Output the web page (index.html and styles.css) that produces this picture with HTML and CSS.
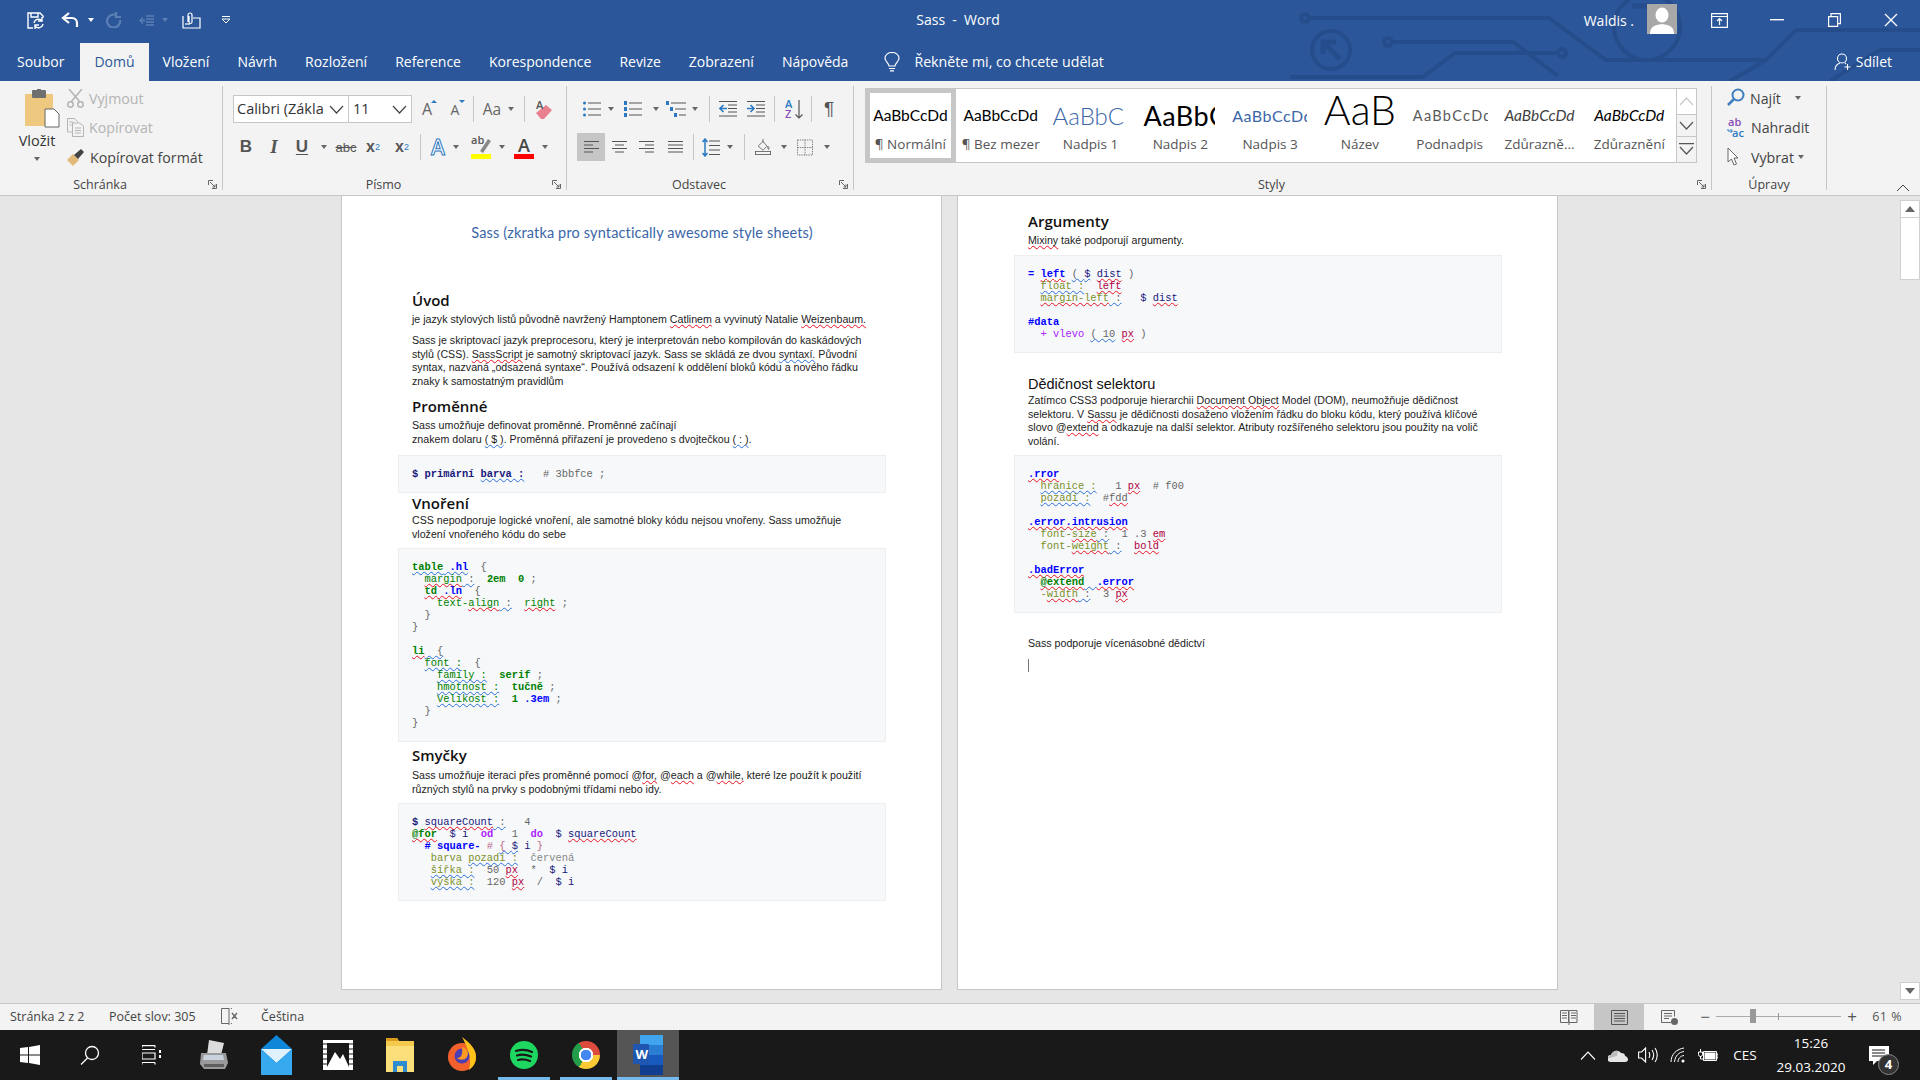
FILE: index.html
```html
<!DOCTYPE html>
<html lang="cs">
<head>
  <meta charset="UTF-8" />
  <title>Sass - Word</title>
  <link rel="stylesheet" href="styles.css">
</head>
<body>
<div class="app">

  <!-- title bar + tabs share the circuit background -->
  <header class="head">
    <svg class="circuit" width="640" height="81" viewBox="1280 0 640 81" fill="none" stroke="#264d8b" stroke-width="4">
      <path d="M1309 18H1549L1606 60H1766L1796 30H1920"/>
      <circle cx="1305" cy="18" r="4"/>
      <path d="M1392 42H1513L1558 76"/>
      <circle cx="1388" cy="42" r="4"/>
      <path d="M1290 77H1423L1455 53H1558"/>
      <circle cx="1562" cy="53" r="4"/>
      <circle cx="1331" cy="50" r="19"/>
      <path d="M1340 59L1325 44M1323 54V42H1336" stroke-width="5"/>
      <circle cx="1647" cy="27" r="33"/>
      <path d="M1632 6H1658V20" stroke-width="5"/>
      <path d="M1730 81L1766 60M1830 81L1880 50H1920"/>
    </svg>

    <div class="titlebar">
      <div class="qat">
        <span class="slot w32">
          <svg width="18" height="17" viewBox="0 0 18 17" fill="none" stroke="#fff" stroke-width="1.4"><path d="M6 16H1V1h12l3 3v2"/><path d="M4 1v4h7V1"/><path d="M7 11a4.500 4.500 0 0 1 8-2M16 12a4.500 4.500 0 0 1-8 2"/><path d="M15 5v4h-4M8 17v-4h4"/></svg>
        </span>
        <span class="slot w36">
          <svg width="18" height="16" viewBox="0 0 18 16" fill="none" stroke="#fff" stroke-width="2.200"><path d="M8 1L2 6l6 5"/><path d="M3 6h8a5 5 0 0 1 5 5v4"/></svg>
        </span>
        <span class="slot w6"><i class="caret white"></i></span>
        <span class="slot w40">
          <svg width="16" height="16" viewBox="0 0 16 16" fill="none" stroke="#5c7fb5" stroke-width="2.200"><path d="M11 3.500A6.500 6.500 0 1 0 14 8"/><path d="M10 0v5h5"/></svg>
        </span>
        <span class="slot w24">
          <svg width="15" height="13" viewBox="0 0 15 13" fill="none" stroke="#5c7fb5" stroke-width="1.300"><path d="M7 2h8M7 5h8M7 8h8M7 11h8M6 6.500H1M4 3.500L1 6.500l3 3"/></svg>
        </span>
        <span class="slot w14"><i class="caret dim"></i></span>
        <span class="slot w38">
          <svg width="19" height="17" viewBox="0 0 19 17" fill="none" stroke="#fff" stroke-width="1.200"><path d="M1 4v12h17V6H11"/><path d="M6 10V3a2 2 0 0 1 4 0v7a1 1 0 0 1-3 0V4"/><path d="M3 12h5"/></svg>
        </span>
        <span class="slot w32">
          <svg width="10" height="8" viewBox="0 0 10 8" fill="none" stroke="#fff"><path d="M1 .5h8M1 3l4 4 4-4z"/></svg>
        </span>
      </div>
      <div class="doc-title">Sass &nbsp;-&nbsp; Word</div>
      <div class="win">
        <span class="user">Waldis .</span>
        <svg class="avatar" width="30" height="30" viewBox="0 0 30 30"><rect width="30" height="30" fill="#a8a8a8"/><ellipse cx="15" cy="11" rx="6.500" ry="7.500" fill="#fff"/><path d="M3 30c0-7 4-9 12-10 8 1 12 3 12 10z" fill="#fff"/></svg>
        <span class="slot w84">
          <svg width="17" height="15" viewBox="0 0 17 15" fill="none" stroke="#fff" stroke-width="1.200"><path d="M.6.600h15.800v13.800H.6zM.6 3.500h15.800"/><path d="M8.500 12V6M6 8l2.500-2.500L11 8"/></svg>
        </span>
        <span class="slot w32"><svg width="14" height="2" viewBox="0 0 14 2"><rect width="14" height="1.400" fill="#fff"/></svg></span>
        <span class="slot w82">
          <svg width="13" height="14" viewBox="0 0 13 14" fill="none" stroke="#fff" stroke-width="1.200"><path d="M.6 3.600h9v9.800h-9zM3 3.500V.6h9.400v10h-2.800"/></svg>
        </span>
        <span class="slot w32">
          <svg width="14" height="14" viewBox="0 0 14 14" stroke="#fff" stroke-width="1.300"><path d="M1 1l12 12M13 1L1 13"/></svg>
        </span>
      </div>
    </div>

    <nav class="tabs">
      <span class="tab">Soubor</span>
      <span class="tab active">Domů</span>
      <span class="tab">Vložení</span>
      <span class="tab">Návrh</span>
      <span class="tab">Rozložení</span>
      <span class="tab">Reference</span>
      <span class="tab">Korespondence</span>
      <span class="tab">Revize</span>
      <span class="tab">Zobrazení</span>
      <span class="tab">Nápověda</span>
      <span class="tell">
        <svg width="16" height="20" viewBox="0 0 16 20" fill="none" stroke="#fff" stroke-width="1.200"><path d="M5 14c0-3-4-4-4-8a7 5.500 0 0 1 14 0c0 4-4 5-4 8z"/><path d="M5 16.500h6M6 18.800h4"/></svg>
        Řekněte mi, co chcete udělat
      </span>
      <span class="share">
        <svg width="17" height="18" viewBox="0 0 17 18" fill="none" stroke="#fff" stroke-width="1.100"><circle cx="8" cy="5.500" r="4.500"/><path d="M1 17c0-4 2-6 5-7M11 10l1 1M13.500 11v6M10.500 14h6"/></svg>
        Sdílet
      </span>
    </nav>
  </header>

  <section class="ribbon">

    <div class="group g-clip">
      <div class="group-body tight clip-body">
        <div class="paste">
          <svg width="35" height="39" viewBox="0 0 35 39"><rect x="0" y="5" width="28" height="32" fill="#edc87e"/><rect x="7" y="1" width="14" height="8" rx="1" fill="#6f6f6f"/><rect x="12" y="0" width="4" height="3" fill="#6f6f6f"/><path d="M20 20h9l5 5v13H20z" fill="#fff" stroke="#666"/></svg>
          <span class="paste-label">Vložit</span>
          <i class="caret"></i>
        </div>
        <div class="clip-list">
          <div class="clip-row off">
            <svg width="17" height="19" viewBox="0 0 17 19" fill="none" stroke="#b4b4b4" stroke-width="1.500"><path d="M2 0l11 13M15 0L4 13"/><circle cx="3.500" cy="15.500" r="2.700"/><circle cx="13.500" cy="15.500" r="2.700"/></svg>
            Vyjmout
          </div>
          <div class="clip-row off">
            <svg width="17" height="19" viewBox="0 0 17 19" fill="none" stroke="#b4b4b4"><path d="M5 14H.5V.5h7l3 3v1"/><path d="M5.500 5h7l4 3v10.500h-11zM8 10h6M8 12.500h6M8 15h6M2.500 4h4M2.500 7h2"/></svg>
            Kopírovat
          </div>
          <div class="clip-row">
            <svg width="18" height="18" viewBox="0 0 18 18"><path d="M0 12l6-6 6 6-6 6z" fill="#e3b978"/><path d="M7 7l7-6 3 3-6 7z" fill="#444"/></svg>
            Kopírovat formát
          </div>
        </div>
      </div>
      <div class="group-label">Schránka</div>
      <svg class="launcher" width="9" height="9" viewBox="0 0 9 9" fill="none" stroke="#666"><path d="M.5 5V.5H5M8.500 4v4.500H4M2 2l5 5M4.500 7H7V4.500"/></svg>
    </div>

    <div class="group g-font">
      <div class="group-body">
        <div class="row font-row">
          <span class="combo c-font">Calibri (Zákla<svg class="chev" width="15" height="9" viewBox="0 0 15 9" fill="none" stroke="#444" stroke-width="1.200"><path d="M1 1l6.500 7L14 1"/></svg></span>
          <span class="combo c-size">11<svg class="chev" width="15" height="9" viewBox="0 0 15 9" fill="none" stroke="#444" stroke-width="1.200"><path d="M1 1l6.500 7L14 1"/></svg></span>
          <span class="slot w30 glyph big-a">A<i class="up"></i></span>
          <span class="slot w26 glyph big-a small-a">A<i class="down"></i></span>
          <span class="slot w10"><i class="vsep"></i></span>
          <span class="slot w28 glyph aa">Aa</span>
          <span class="slot w10"><i class="caret"></i></span>
          <span class="slot w16"><i class="vsep"></i></span>
          <span class="slot w24">
            <svg width="18" height="19" viewBox="0 0 18 19"><path d="M1 13L11 5l6 5-8 9H6z" fill="#e8808f"/><text x="1" y="9" class="svg-a">A</text></svg>
          </span>
        </div>
        <div class="row font-row">
          <span class="slot w26 glyph bold">B</span>
          <span class="slot w30 glyph ital">I</span>
          <span class="slot w26 glyph under">U</span>
          <span class="slot w18"><i class="caret"></i></span>
          <span class="slot w26 glyph strike">abc</span>
          <span class="slot w28 glyph bold sm">x<sub>2</sub></span>
          <span class="slot w30 glyph bold sm">x<sup>2</sup></span>
          <span class="slot w6"><i class="vsep"></i></span>
          <span class="slot w30 glyph effect">A</span>
          <span class="slot w6"><i class="caret"></i></span>
          <span class="slot w10"></span>
          <span class="slot w24">
            <svg width="20" height="24" viewBox="0 0 20 24"><path d="M9 16l8-12 3 2-8 12z" fill="#888"/><rect y="19" width="20" height="5" fill="#ff0"/><text x="0" y="9" class="svg-ab">ab</text></svg>
          </span>
          <span class="slot w18"><i class="caret"></i></span>
          <span class="slot w26 fcolor"><span class="fc-a">A</span><i class="fc-bar"></i></span>
          <span class="slot w16"><i class="caret"></i></span>
        </div>
      </div>
      <div class="group-label">Písmo</div>
      <svg class="launcher" width="9" height="9" viewBox="0 0 9 9" fill="none" stroke="#666"><path d="M.5 5V.5H5M8.500 4v4.500H4M2 2l5 5M4.500 7H7V4.500"/></svg>
    </div>

    <div class="group g-para">
      <div class="group-body">
        <div class="row para-row">
          <span class="slot w30"><svg width="18" height="18" viewBox="0 0 18 18" fill="none" stroke="#555"><path d="M5 3h13M5 9h13M5 15h13"/><g fill="#2b79c2" stroke="none"><circle cx="1.500" cy="3" r="1.500"/><circle cx="1.500" cy="9" r="1.500"/><circle cx="1.500" cy="15" r="1.500"/></g></svg></span>
          <span class="slot w8"><i class="caret"></i></span>
          <span class="slot w36"><svg width="18" height="18" viewBox="0 0 18 18" fill="none" stroke="#555"><path d="M5 3h13M5 9h13M5 15h13"/><g fill="#2b79c2" stroke="none"><rect y="1" width="3" height="4"/><rect y="7" width="3" height="4"/><rect y="13" width="3" height="4"/></g></svg></span>
          <span class="slot w10"><i class="caret"></i></span>
          <span class="slot w30"><svg width="20" height="18" viewBox="0 0 20 18" fill="none" stroke="#555"><path d="M5 3h15M9 9h11M13 15h7"/><g fill="#2b79c2" stroke="none"><rect y="1" width="3" height="4"/><rect x="4" y="7" width="3" height="4"/><rect x="8" y="13" width="3" height="4"/></g></svg></span>
          <span class="slot w8"><i class="caret"></i></span>
          <span class="slot w20"><i class="vsep"></i></span>
          <span class="slot w18"><svg width="18" height="16" viewBox="0 0 18 16" fill="none" stroke="#555"><path d="M0 .5h18M9 4h9M9 7.500h9M9 11h9M0 15h18"/><path d="M1 7.500h7M4.500 4L1 7.500 4.500 11" stroke="#2b79c2" stroke-width="1.600"/></svg></span>
          <span class="slot w8"></span>
          <span class="slot w22"><svg width="18" height="16" viewBox="0 0 18 16" fill="none" stroke="#555"><path d="M0 .5h18M9 4h9M9 7.500h9M9 11h9M0 15h18"/><path d="M0 7.500h7M3.500 4L7 7.500 3.500 11" stroke="#2b79c2" stroke-width="1.600"/></svg></span>
          <span class="slot w14"><i class="vsep"></i></span>
          <span class="slot w26"><svg width="18" height="20" viewBox="0 0 18 20" fill="none" stroke="#555" stroke-width="1.200"><path d="M14 1v18M10.500 15.500L14 19l3.500-3.500"/><text x="0" y="9" class="svg-az blue">A</text><text x="0" y="19" class="svg-az violet">Z</text></svg></span>
          <span class="slot w8"><i class="vsep"></i></span>
          <span class="slot w28 pilcrow">¶</span>
        </div>
        <div class="row para-row">
          <span class="slot w28 on"><svg width="15" height="12" viewBox="0 0 15 12" stroke="#555"><path d="M0 .5h15M0 4h9M0 7.500h15M0 11h9"/></svg></span>
          <span class="slot w28"><svg width="15" height="12" viewBox="0 0 15 12" stroke="#555"><path d="M0 .5h15M3 4h9M0 7.500h15M3 11h9"/></svg></span>
          <span class="slot w26"><svg width="15" height="12" viewBox="0 0 15 12" stroke="#555"><path d="M0 .5h15M6 4h9M0 7.500h15M6 11h9"/></svg></span>
          <span class="slot w32"><svg width="15" height="12" viewBox="0 0 15 12" stroke="#555"><path d="M0 .5h15M0 4h15M0 7.500h15M0 11h15"/></svg></span>
          <span class="slot w4"><i class="vsep"></i></span>
          <span class="slot w32"><svg width="18" height="19" viewBox="0 0 18 19" fill="none" stroke="#555"><path d="M7 3h11M7 7.500h11M7 12h11M7 16.500h11"/><path d="M3 1v17M.5 4L3 1l2.500 3M.5 15L3 18l2.500-3" stroke="#2b79c2" stroke-width="1.500"/></svg></span>
          <span class="slot w6"><i class="caret"></i></span>
          <span class="slot w22"><i class="vsep"></i></span>
          <span class="slot w16"><svg width="20" height="20" viewBox="0 0 20 20" fill="none" stroke="#555"><path d="M4 9l6-6 5 6-5 5z"/><path d="M10 0v4M16 9c2 2 2 4 1 4s-1-2-1-4z"/><rect x=".5" y="15.500" width="19" height="4"/></svg></span>
          <span class="slot w26"><i class="caret"></i></span>
          <span class="slot w16"><svg width="17" height="17" viewBox="0 0 17 17" fill="none" stroke="#777" stroke-dasharray="1.500 1"><path d="M.5.500h16v16H.5zM8.500.500v16M.5 8.500h16"/></svg></span>
          <span class="slot w28"><i class="caret"></i></span>
        </div>
      </div>
      <div class="group-label">Odstavec</div>
      <svg class="launcher" width="9" height="9" viewBox="0 0 9 9" fill="none" stroke="#666"><path d="M.5 5V.5H5M8.500 4v4.500H4M2 2l5 5M4.500 7H7V4.500"/></svg>
    </div>

    <div class="group g-styles">
      <div class="gallery">
        <div class="style-item current"><div class="preview">AaBbCcDd</div><div class="style-name">¶ Normální</div></div>
        <div class="style-item"><div class="preview">AaBbCcDd</div><div class="style-name">¶ Bez mezer</div></div>
        <div class="style-item"><div class="preview h1">AaBbCcDd</div><div class="style-name">Nadpis 1</div></div>
        <div class="style-item"><div class="preview h2p">AaBbCcDd</div><div class="style-name">Nadpis 2</div></div>
        <div class="style-item"><div class="preview h3p">AaBbCcDd</div><div class="style-name">Nadpis 3</div></div>
        <div class="style-item"><div class="preview title-p">AaB</div><div class="style-name">Název</div></div>
        <div class="style-item"><div class="preview sub-p">AaBbCcDd</div><div class="style-name">Podnadpis</div></div>
        <div class="style-item"><div class="preview em-p">AaBbCcDd</div><div class="style-name">Zdůrazně...</div></div>
        <div class="style-item"><div class="preview em2-p">AaBbCcDd</div><div class="style-name">Zdůraznění</div></div>
        <div class="gallery-scroll">
          <span class="gs gs-up"><svg width="15" height="9" viewBox="0 0 15 9" fill="none" stroke="#c9c9c9" stroke-width="1.200"><path d="M1 8l6.500-7L14 8"/></svg></span>
          <span class="gs gs-down"><svg width="15" height="9" viewBox="0 0 15 9" fill="none" stroke="#555" stroke-width="1.200"><path d="M1 1l6.500 7L14 1"/></svg></span>
          <span class="gs gs-more"><svg width="15" height="13" viewBox="0 0 15 13" fill="none" stroke="#555" stroke-width="1.200"><path d="M0 .6h15M1 4l6.500 7L14 4"/></svg></span>
        </div>
      </div>
      <div class="group-label">Styly</div>
      <svg class="launcher" width="9" height="9" viewBox="0 0 9 9" fill="none" stroke="#666"><path d="M.5 5V.5H5M8.500 4v4.500H4M2 2l5 5M4.500 7H7V4.500"/></svg>
    </div>

    <div class="group g-edit">
      <div class="group-body tight edit-list">
        <div class="clip-row">
          <svg width="18" height="20" viewBox="0 0 18 20" fill="none" stroke="#3f7fbf" stroke-width="2"><circle cx="11" cy="7" r="5.500"/><path d="M7 11l-6 6" stroke-width="2.600"/></svg>
          Najít <i class="caret gap"></i>
        </div>
        <div class="clip-row tight-icon">
          <svg width="20" height="20" viewBox="0 0 20 20"><text x="1" y="8" class="svg-ab violet">ab</text><text x="5" y="19" class="svg-ab blue">ac</text><path d="M1 11v2h4M3.500 11l2 2-2 2" fill="none" stroke="#2b79c2"/></svg>
          Nahradit
        </div>
        <div class="clip-row">
          <svg width="12" height="20" viewBox="0 0 12 20" fill="#fff" stroke="#666"><path d="M1 1v14l3.500-3 2.500 6 2.500-1-2.500-6H11z"/></svg>
          <span class="vybrat">Vybrat</span> <i class="caret"></i>
        </div>
      </div>
      <div class="group-label edit-label">Úpravy</div>
    </div>

    <svg class="collapse" width="14" height="8" viewBox="0 0 14 8" fill="none" stroke="#444"><path d="M1 7l6-6 6 6"/></svg>
  </section>

  <main class="doc">
    <div class="pages">

      <article class="page">
        <h1 class="doc-head">Sass (zkratka pro syntactically awesome style sheets)</h1>
        <h2 class="m-uvod">Úvod</h2>
        <p class="m-a">je jazyk stylových listů původně navržený Hamptonem <span class="sp">Catlinem</span> a vyvinutý Natalie <span class="sp">Weizenbaum.</span></p>
        <p class="m-b">Sass je skriptovací jazyk preprocesoru, který je interpretován nebo kompilován do kaskádových<br>
        stylů (CSS). <span class="sp">SassScript</span> je samotný skriptovací jazyk. Sass se skládá ze dvou <span class="gr">syntaxí.</span> Původní<br>
        syntax, nazvaná „odsazená syntaxe“. Používá odsazení k oddělení bloků kódu a nového řádku<br>
        znaky k samostatným pravidlům</p>
        <h2 class="m-prom">Proměnné</h2>
        <p class="m-c tall">Sass umožňuje definovat proměnné. Proměnné začínají<br>
        znakem dolaru <span class="gr">( $ )</span>. Proměnná přiřazení je provedeno s dvojtečkou <span class="gr">( : )</span>.</p>
<pre class="code m-f"><b class="v">$ primární </b><b class="v gr">barva :</b><span class="g">   # 3bbfce ;</span></pre>
        <h2 class="m-vnor">Vnoření</h2>
        <p class="tall m-e">CSS nepodporuje logické vnoření, ale samotné bloky kódu nejsou vnořeny. Sass umožňuje<br>
        vložení vnořeného kódu do sebe</p>
<pre class="code"><b class="k gr">table</b><b class="t gr"> .hl</b><span class="g">  {</span>
  <span class="k sp">margin</span><span class="g gr"> :</span>  <b class="k">2em  0</b><span class="g"> ;</span>
  <b class="k sp">td</b><b class="t sp"> .ln</b><span class="g">  {</span>
    <span class="k">text-</span><span class="k sp">align</span><span class="g gr"> :</span>  <span class="k sp">right</span><span class="g"> ;</span>
  <span class="g">}</span>
<span class="g">}</span>

<b class="k sp">li</b><span class="g gr">  {</span>
  <span class="k gr">font :</span><span class="g">  {</span>
    <span class="k gr">family :</span>  <b class="k">serif</b><span class="g"> ;</span>
    <span class="k gr">hmotnost :</span>  <b class="k">tučně</b><span class="g"> ;</span>
    <span class="k gr">Velikost :</span>  <b class="k">1 </b><b class="t">.3em</b><span class="g"> ;</span>
  <span class="g">}</span>
<span class="g">}</span></pre>
        <h2 class="m-smy">Smyčky</h2>
        <p class="tall m-g">Sass umožňuje iteraci přes proměnné pomocí @<span class="sp">for,</span> @<span class="sp">each</span> a @<span class="sp">while,</span> které lze použít k použití<br>
        různých stylů na prvky s podobnými třídami nebo idy.</p>
<pre class="code"><b class="v">$ </b><span class="v sp">squareCount</span><span class="g gr"> :</span><span class="g">   4</span>
<b class="k sp">@for</b>  <span class="v">$ i</span>  <b class="p">od</b><span class="g">   1</span>  <b class="p">do</b>  <span class="v">$ </span><span class="v sp">squareCount</span>
  <b class="t"># square-</b> <span class="m">#</span> <span class="m gr">{ </span><span class="v gr">$</span> <span class="v">i</span> <span class="m">}</span>
   <span class="o">barva </span><span class="o gr">pozadí :</span>  <span class="lg">červená</span>
   <span class="o gr">šířka :</span>  <span class="g">50 </span><span class="r sp">px</span>  <span class="g">*</span>  <span class="v">$ i</span>
   <span class="o gr">výška :</span>  <span class="g">120 </span><span class="r sp">px</span>  <span class="g">/</span>  <span class="v">$ i</span></pre>
      </article>

      <article class="page">
        <h2 class="m-arg">Argumenty</h2>
        <p class="m-a2"><span class="sp">Mixiny</span> také podporují argumenty.</p>
<pre class="code m-h"><b class="t">=</b> <b class="t sp">left</b> <span class="g gr">( </span><span class="v gr">$</span> <span class="v sp">dist</span><span class="g"> )</span>
  <span class="o gr">float :</span>  <span class="r sp">left</span>
  <span class="o sp">margin-left</span><span class="g gr"> :</span>   <span class="v">$ </span><span class="v sp">dist</span>

<b class="t">#data</b>
  <span class="p">+ vlevo</span> <span class="g gr">( 10</span> <span class="r sp">px</span><span class="g"> )</span></pre>
        <h3 class="m-ded">Dědičnost selektoru</h3>
        <p class="m-e">Zatímco CSS3 podporuje hierarchii <span class="sp">Document Object</span> Model (DOM), neumožňuje dědičnost<br>
        selektoru. V <span class="sp">Sassu</span> je dědičnosti dosaženo vložením řádku do bloku kódu, který používá klíčové<br>
        slovo @<span class="sp">extend</span> a odkazuje na další selektor. Atributy rozšířeného selektoru jsou použity na volič<br>
        volání.</p>
<pre class="code"><b class="t sp">.rror</b>
  <span class="o gr">hranice :</span>   <span class="g">1 </span><span class="r sp">px</span>  <span class="g"># f00</span>
  <span class="o gr">pozadí :</span>  <span class="g">#</span><span class="g sp">fdd</span>

<b class="t sp">.error.intrusion</b>
  <span class="o">font-</span><span class="o sp">size</span><span class="g gr"> :</span>  <span class="g">1 .3 </span><span class="r sp">em</span>
  <span class="o">font-</span><span class="o sp">weight</span><span class="g gr"> :</span>  <span class="r sp">bold</span>

<b class="t sp">.badError</b>
  <b class="k sp">@extend</b><span class="g gr">  </span><b class="t sp">.error</b>
  <span class="o">-</span><span class="o sp">width</span><span class="g gr"> :</span>  <span class="g">3 </span><span class="r sp">px</span></pre>
        <p class="m-last">Sass podporuje vícenásobné dědictví</p>
        <div class="cursor"></div>
      </article>
    </div>

    <aside class="vscroll">
      <span class="vs-btn"><svg width="10" height="6" viewBox="0 0 10 6"><path d="M5 0l5 6H0z" fill="#666"/></svg></span>
      <span class="vs-thumb"></span>
      <span class="vs-btn vs-end"><svg width="10" height="6" viewBox="0 0 10 6"><path d="M5 6l5-6H0z" fill="#666"/></svg></span>
    </aside>
  </main>

  <footer class="status">
    <span class="st-page">Stránka 2 z 2</span>
    <span class="st-words">Počet slov: 305</span>
    <svg class="st-proof" width="17" height="19" viewBox="0 0 17 19" fill="none" stroke="#666"><path d="M8 1.500H.5v15H8M8 1v17M10 1.500h1M10 16.500h1"/><path d="M11 6l5 6M16 6l-5 6" stroke-width="1.400"/></svg>
    <span class="st-lang">Čeština</span>
    <div class="views">
      <span class="view"><svg width="18" height="15" viewBox="0 0 18 15" fill="none" stroke="#666"><path d="M.5.500h8v12h-8zM9 .5h8v12H9zM2 3h5M2 5.500h5M2 8h5M11 3h5M11 5.500h5M11 8h5M9 13v2"/></svg></span>
      <span class="view active"><svg width="17" height="15" viewBox="0 0 17 15" fill="none" stroke="#555"><path d="M.5.500h16v14H.5zM3 3.500h11M3 6h11M3 8.500h11M3 11h11"/></svg></span>
      <span class="view"><svg width="17" height="15" viewBox="0 0 17 15" fill="none" stroke="#666"><path d="M10 12.500H.5V.5h13v6M3 3.500h8M3 6h8M3 8.500h5"/><circle cx="13.500" cy="11.500" r="3.500" fill="#666" stroke="none"/></svg></span>
    </div>
    <div class="zoom">
      <span class="z-btn">−</span>
      <div class="z-track"><i class="z-tick"></i><i class="z-thumb"></i></div>
      <span class="z-btn">+</span>
      <span class="z-val">61 %</span>
    </div>
  </footer>

  <div class="taskbar">
    <span class="tb w60">
      <svg width="20" height="20" viewBox="0 0 20 20" fill="#fff"><path d="M0 3l8-1v7.500H0zM9 2l11-2v9.500H9zM0 10.500h8V18l-8-1zM9 10.500h11V20L9 18z"/></svg>
    </span>
    <span class="tb w60">
      <svg width="20" height="20" viewBox="0 0 20 20" fill="none" stroke="#fff" stroke-width="1.300"><circle cx="12" cy="8" r="6.500"/><path d="M7.500 13L1 19.500"/></svg>
    </span>
    <span class="tb w63">
      <svg width="20" height="20" viewBox="0 0 20 20" fill="none" stroke="#fff" stroke-width="1.200"><path d="M0 .6h13M0 4.500h13M0 8h13v6H0V8zM0 17.500h13M0 17.500v2M13 17.500v2M13 .6v2M0 .6v2"/><path d="M17 5h2v3h-2zM17 10h2v3h-2z" fill="#fff" stroke="none"/></svg>
    </span>
    <span class="tb w62">
      <svg width="30" height="32" viewBox="0 0 30 32"><path d="M10 1l15 3-3 12H8z" fill="#dcdcdc"/><path d="M2 14h25l2 10-3 6H5l-4-5z" fill="#9a9a9a"/><path d="M5 16h19l1 5H4z" fill="#c9d3dd"/><path d="M5 25h20v3H5z" fill="#5f5f5f"/></svg>
    </span>
    <span class="tb w62">
      <svg width="31" height="40" viewBox="0 0 31 40"><path d="M0 14L15.500 0 31 14v26H0z" fill="#0f86d8"/><path d="M0 14h31L15.500 28z" fill="#dff1fb"/><path d="M0 14v26h31V14L15.500 28z" fill="#37a9ee"/></svg>
    </span>
    <span class="tb w62">
      <svg width="30" height="30" viewBox="0 0 30 30"><rect width="30" height="30" fill="#fff"/><rect x="4" y="3" width="22" height="24" fill="#191919"/><path d="M4 27l8-15 5 7 3-5 6 13z" fill="#fff"/><path d="M0 4h4M0 9h4M0 14h4M0 19h4M0 24h4M26 4h4M26 9h4M26 14h4M26 19h4M26 24h4" stroke="#191919"/></svg>
    </span>
    <span class="tb w62">
      <svg width="28" height="34" viewBox="0 0 28 34"><path d="M0 0h11l2 3h15v31H0z" fill="#f5c94e"/><path d="M0 0h11l2 3H0z" fill="#d99c1c"/><path d="M0 8h28v26H0z" fill="#fadf7a"/><path d="M7 34V23h14v11h-4v-6h-6v6z" fill="#2f8bd0"/></svg>
    </span>
    <span class="tb w62">
      <svg width="28" height="36" viewBox="0 0 28 36"><circle cx="14" cy="20" r="14" fill="#f2602c"/><path d="M14 0c8 6 14 12 14 20 0 6-3 10-7 13 2-8 2-16-7-33z" fill="#ffc21a"/><circle cx="14" cy="19" r="7.500" fill="#4b3fb3"/><path d="M14 10c6 2 7 6 5 10-3 4-8 3-10 1 4 0 6-3 5-11z" fill="#ff9a1f"/></svg>
    </span>
    <span class="tb w62 run">
      <svg width="28" height="28" viewBox="0 0 28 28"><circle cx="14" cy="14" r="14" fill="#1ed760"/><path d="M6 10c6-2 11-1.500 16 1M7 14.500c5-1.500 9-1 14 1M8 19c4-1 8-.6 12 1" fill="none" stroke="#191919" stroke-width="2.200" stroke-linecap="round"/></svg>
    </span>
    <span class="tb w62 run">
      <i class="chrome"></i>
    </span>
    <span class="tb w62 run current-app">
      <svg width="30" height="40" viewBox="0 0 30 40"><rect x="7" width="23" height="10" fill="#41a5ee"/><rect x="7" y="10" width="23" height="10" fill="#2b7cd3"/><rect x="7" y="20" width="23" height="10" fill="#185abd"/><rect x="7" y="30" width="23" height="10" fill="#103f91"/><rect y="9" width="16" height="20" rx="1" fill="#1f57b0"/><text x="2.500" y="24" class="svg-w">W</text></svg>
    </span>

    <div class="tray">
      <span class="tr w30"><svg width="16" height="9" viewBox="0 0 16 9" fill="none" stroke="#fff" stroke-width="1.100"><path d="M1 8.500l7-7.500 7 7.500"/></svg></span>
      <span class="tr w30"><svg width="20" height="13" viewBox="0 0 20 13"><path d="M3 13a3.500 3.500 0 0 1 0-7c1-4 7-6 10-2 3 0 4 1 4 3 2 .5 3 2 3 3.500 0 1.500-1 2.500-3 2.500z" fill="#e6e6e6"/><path d="M0 9.500c0-2 1-3.500 3-3.500 1-3 4-5 7-4l-1 5z" fill="#bdbdbd"/></svg></span>
      <span class="tr w30"><svg width="20" height="16" viewBox="0 0 20 16" fill="none" stroke="#fff" stroke-width="1.100"><path d="M.6 5v6h3l4 4V1l-4 4zM11 5c1 2 1 4 0 6M14 3c2 3 2 7 0 10M17 1c3 4 3 10 0 14"/></svg></span>
      <span class="tr w30"><svg width="16" height="16" viewBox="0 0 16 16" fill="none" stroke="#fff"><path d="M1 15C1 7 7 2 14 1M4.500 15C5 9 9 5 14 4.500M8 15c0-3 2-6 6-6.500"/><circle cx="13" cy="14" r="1.500" fill="#fff" stroke="none"/></svg></span>
      <span class="tr w30"><svg width="20" height="14" viewBox="0 0 20 14" fill="none" stroke="#fff"><path d="M5.500 3.500h13v9h-13zM18.500 6h1.500v4h-1.500"/><rect x="6.500" y="4.500" width="11" height="7" fill="#fff" stroke="none"/><path d="M2.500 1v3M.5 4h4v2.500a2 2 0 0 1-4 0zM2.500 8v3h3" stroke-width="1"/></svg></span>
      <span class="tr w44 ces">CES</span>
      <span class="clock"><span>15:26</span><span>29.03.2020</span></span>
      <span class="notif">
        <svg width="20" height="19" viewBox="0 0 20 19"><path d="M0 0h20v15H8l-4 4v-4H0z" fill="#fff"/><path d="M3 4h13M3 7h13M3 10h13" stroke="#191919"/></svg>
        <i class="badge">4</i>
      </span>
    </div>
  </div>
</div>
</body>
</html>
```
FILE: styles.css
```css
* {
  box-sizing: border-box;
}

html, body {
  margin: 0;
  height: 100%;
  overflow: hidden;
}

body {
  font-family: "Open Sans", "Liberation Sans", sans-serif;
  font-size: 13.5px;
  color: #444;
  background: #e6e6e6;
}

.app {
  width: 1920px;
  height: 1080px;
  display: flex;
  flex-direction: column;
}

/* width helpers for toolbar slots */
.slot { display: flex; align-items: center; justify-content: center; flex: none; height: 100%; }
.w4 { width: 4px; } .w6 { width: 6px; } .w8 { width: 8px; } .w10 { width: 10px; }
.w14 { width: 14px; } .w16 { width: 16px; } .w18 { width: 18px; } .w20 { width: 20px; }
.w22 { width: 22px; } .w24 { width: 24px; } .w26 { width: 26px; } .w28 { width: 28px; }
.w30 { width: 30px; } .w32 { width: 32px; } .w36 { width: 36px; } .w38 { width: 38px; }
.w40 { width: 40px; } .w44 { width: 44px; } .w60 { width: 60px; } .w62 { width: 62px; }
.w63 { width: 63px; } .w82 { width: 82px; } .w84 { width: 84px; }

.caret {
  display: block;
  width: 0;
  height: 0;
  border-left: 3.5px solid transparent;
  border-right: 3.5px solid transparent;
  border-top: 4px solid #666;
}
.caret.white { border-top-color: #fff; }
.caret.dim { border-top-color: #5c7fb5; }
.caret.gap { margin-left: 9px; }

.vsep { display: block; width: 1px; height: 26px; background: #c6c6c6; }

/* header */
.head {
  position: relative;
  height: 81px;
  flex: none;
  background: #2b579a;
  color: #fff;
}

.circuit { position: absolute; right: 0; top: 0; }

.titlebar {
  position: relative;
  height: 43px;
  display: grid;
  grid-template-columns: 1fr auto 1fr;
  padding-bottom: 3px;
}

.qat { display: flex; padding-left: 20px; height: 40px; }

.doc-title { align-self: center; font-size: 14px; margin: -2px 0 0 -4px; }

.win { display: flex; justify-content: flex-end; align-items: center; padding-right: 13px; }
.user { margin-right: 13px; font-size: 14px; }
.avatar { display: block; margin-top: -2px; }

.tabs {
  position: relative;
  display: flex;
  height: 38px;
  padding-left: 3px;
}

.tab {
  padding: 0 14px;
  font-size: 14px;
  line-height: 37px;
  white-space: nowrap;
}

.tab:first-child { margin-right: 2px; }

.tab.active { background: #f3f3f3; color: #2b579a; }

.tell {
  display: flex;
  align-items: center;
  gap: 14px;
  margin-left: 22px;
  font-size: 14.2px;
  padding-bottom: 1px;
}

.share {
  display: flex;
  align-items: center;
  gap: 5px;
  margin-left: auto;
  padding-right: 28px;
  font-size: 14px;
  padding-bottom: 1px;
}

/* ribbon */
.ribbon {
  position: relative;
  flex: none;
  height: 115px;
  display: flex;
  padding-top: 5px;
  background: #f3f3f3;
  border-bottom: 1px solid #c6c6c6;
  font-size: 14px;
}

.group {
  position: relative;
  height: 104px;
  display: flex;
  flex-direction: column;
  border-right: 1px solid #c6c6c6;
}

.g-clip { width: 223px; }
.g-font { width: 344px; padding-left: 10px; }
.g-para { width: 287px; padding-left: 10px; }
.g-styles { width: 858px; padding-left: 11px; }
.g-edit { width: 115px; }

.group-body {
  flex: 1;
  display: flex;
  flex-direction: column;
  gap: 10px;
  padding-top: 9px;
}

.group-body.tight { padding-top: 0; }

.group-label {
  height: 20px;
  margin-bottom: -5px;
  padding-right: 22px;
  text-align: center;
  font-size: 12.5px;
  line-height: 20px;
  color: #444;
}

.g-font .group-label, .g-para .group-label { padding-left: 0; padding-right: 32px; }
.g-styles .group-label { padding-right: 33px; }
.edit-label { padding-right: 0; }

.launcher { position: absolute; right: 5px; bottom: 1px; }

.collapse { position: absolute; right: 10px; top: 103px; }

.clip-body { flex-direction: row; gap: 0; padding-left: 15px; }

.paste { width: 44px; display: flex; flex-direction: column; align-items: center; padding-top: 3px; }
.paste svg { margin-left: 10px; }
.paste-label { margin-top: 2px; font-size: 14.5px; color: #333; line-height: 22px; }
.paste .caret { margin-top: 5px; }

.clip-list, .edit-list { display: flex; flex-direction: column; gap: 5.5px; }
.clip-list { margin-left: 8px; }
.edit-list { padding-left: 15px; }

.clip-row {
  display: flex;
  align-items: center;
  gap: 5px;
  height: 24px;
  white-space: nowrap;
  color: #444;
  font-size: 14.2px;
}

.clip-row.off { color: #b4b4b4; }
.tight-icon { gap: 4px; }
.vybrat { margin-left: 7px; margin-right: -1px; }

.row { display: flex; height: 28px; }

.combo {
  display: flex;
  align-items: center;
  background: #fff;
  border: 1px solid #c6c6c6;
  height: 28px;
  padding-left: 3px;
  padding-bottom: 2px;
  white-space: nowrap;
  overflow: hidden;
  color: #333;
  font-size: 14.5px;
  position: relative;
}

.c-font { width: 116px; }
.c-size { width: 63px; margin-left: 0; padding-left: 4px; border-left: 0; }
.chev { position: absolute; right: 4px; top: 9px; background: #fff; box-shadow: -4px 0 0 #fff; }

.glyph { color: #555; font-size: 17px; }
.bold { font-family: "Liberation Sans", sans-serif; font-weight: bold; }
.ital { font-family: "Liberation Serif", serif; font-style: italic; font-weight: bold; font-size: 19px; }
.under { font-family: "Liberation Sans", sans-serif; font-weight: bold; text-decoration: underline; text-underline-offset: 2px; }
.strike { font-family: "Liberation Sans", sans-serif; font-size: 13px; text-decoration: line-through; }
.sm { font-size: 16px; }
.sm sub, .sm sup { font-size: 9px; color: #2b79c2; font-weight: normal; line-height: 0; }
.aa { font-size: 15.5px; color: #666; }
.big-a { font-size: 16px; position: relative; color: #666; }
.small-a { font-size: 14px; }
.big-a i { position: absolute; left: 19px; top: 5px; width: 0; height: 0; border-left: 3px solid transparent; border-right: 3px solid transparent; }
.big-a .up { border-bottom: 3px solid #2b79c2; }
.big-a .down { border-top: 3px solid #2b79c2; left: 17px; }
.effect { color: #fff; font-size: 21px; font-weight: 600; -webkit-text-stroke: 1px #2b79c2; }
.fcolor { flex-direction: column; gap: 0; }
.fc-a { font-size: 18px; font-weight: 600; line-height: 18px; color: #444; }
.fc-bar { display: block; width: 20px; height: 5px; background: #f00; margin-top: 0; }

.pilcrow { font-size: 19px; color: #555; font-family: "Liberation Sans", sans-serif; }
.on { background: #c6c6c6; }

.svg-a { font: 600 11px "Open Sans", sans-serif; fill: #555; }
.svg-ab { font: 600 11px "Open Sans", sans-serif; fill: #555; }
.svg-az { font: 600 11px "Open Sans", sans-serif; stroke: none; }
.svg-w { font: bold 13px "Open Sans", sans-serif; fill: #fff; }
text.blue { fill: #2b79c2; }
text.violet { fill: #8a4fb5; }

/* style gallery */
.gallery {
  display: flex;
  width: 832px;
  height: 75px;
  margin-top: 2px;
  margin-bottom: 12px;
  background: #fff;
  border: 1px solid #c6c6c6;
}

.style-item { width: 89.8px; flex: none; padding: 3px 5px 0; overflow: hidden; }
.style-item.current { border: 5px solid #c6c6c6; padding: 0 0; margin-top: -1px; margin-left: -1px; height: 75px; width: 90.8px; }

.preview {
  height: 47px;
  line-height: 47px;
  font-family: Lato, "Open Sans", sans-serif;
  font-size: 15.5px;
  color: #000;
  text-align: center;
  white-space: nowrap;
  overflow: hidden;
}

.style-item.current .preview { height: 46px; line-height: 45px; }

.preview.h1 { font-size: 24px; color: #3a66a8; text-align: left; font-weight: 300; padding-left: 2px; margin-right: 6px; }
.preview.h2p { font-size: 27px; text-align: left; letter-spacing: .5px; padding-left: 3px; margin-right: 5px; }
.preview.h3p { font-size: 16px; color: #3a66a8; text-align: left; letter-spacing: .5px; padding-left: 2px; margin-right: 3px; }
.preview.title-p { font-size: 41px; line-height: 36px; height: 36px; margin-bottom: 11px; font-weight: 300; }
.preview.sub-p { color: #5a5a5a; letter-spacing: 1.3px; font-size: 14.5px; text-align: left; padding-left: 3px; margin-right: 2px; }
.preview.em-p { font-style: italic; color: #404040; }
.preview.em2-p { font-style: italic; }

.style-name {
  margin-top: -5px;
  height: 20px;
  line-height: 20px;
  text-align: center;
  white-space: nowrap;
  color: #555;
  font-size: 13.5px;
}

.gallery-scroll { display: flex; flex-direction: column; width: 20px; margin-left: auto; border-left: 1px solid #c6c6c6; }
.gs { display: flex; align-items: center; justify-content: center; background: #f3f3f3; }
.gs-up { height: 25px; background: #fff; }
.gs-down { height: 23px; border-top: 1px solid #c6c6c6; border-bottom: 1px solid #c6c6c6; }
.gs-more { height: 25px; }

/* document */
.doc {
  flex: 1;
  display: flex;
  background: #e6e6e6;
  overflow: hidden;
}

.pages {
  display: flex;
  gap: 15px;
  padding-left: 341px;
  width: 1900px;
}

.page {
  width: 601px;
  height: 794px;
  padding: 0 55px 0 56px;
  background: #fff;
  border: 1px solid #c6c6c6;
  border-top: 0;
  font-family: "Liberation Sans", sans-serif;
  font-size: 10.65px;
  color: #222;
}

.doc-head {
  margin: 27px 0 0;
  height: 20px;
  line-height: 20px;
  text-align: center;
  font-family: Lato, "Open Sans", sans-serif;
  font-size: 14.5px;
  font-weight: 400;
  letter-spacing: .15px;
  color: #3a66a8;
}

h2, h3 {
  margin: 0 0 0 14px;
  height: 16px;
  line-height: 16px;
  font-family: "Open Sans", sans-serif;
  font-size: 15px;
  color: #111;
  white-space: nowrap;
}

h2 { font-weight: 600; }
h3 { font-weight: 400; font-family: "Liberation Sans", sans-serif; font-size: 14.5px; }

p {
  margin: 0 0 0 14px;
  line-height: 13.4px;
  white-space: nowrap;
}

p.tall { line-height: 14px; }

.m-uvod { margin-top: 49px; }
.m-a { margin-top: 5px; }
.m-b { margin-top: 8px; }
.m-prom { margin-top: 10px; }
.m-c { margin-top: 4px; }
.m-vnor { margin-top: 2px; }
.m-e { margin-top: 2px; }
.m-smy { margin-top: 5px; }
.m-g { margin-top: 5px; }
.m-arg { margin-top: 17px; }
.m-a2 { margin-top: 5px; }
.m-ded { margin-top: 23px; }
.m-last { margin-top: 24px; }

.code {
  margin: 7px 0 0;
  padding: 12px 13px;
  background: #f6f8fa;
  border: 1px solid #eceef0;
  font-family: "Liberation Mono", monospace;
  font-size: 10.4px;
  line-height: 12px;
  color: #666;
  white-space: pre;
}

.code.m-f { margin-top: 9px; }
.code.m-h { margin-top: 8px; }

.v { color: #19177c; }
.g { color: #666; }
.lg { color: #888; }
.k { color: #008000; }
.t { color: #0000ff; }
.p { color: #aa22ff; }
.m { color: #bb6688; }
.o { color: #7d9029; }
.r { color: #b00040; }

.sp, .gr {
  text-decoration-line: underline;
  text-decoration-style: wavy;
  text-decoration-thickness: 1.2px;
  text-decoration-skip-ink: none;
  text-underline-offset: 1px;
}

.sp { text-decoration-color: #e81123; }
.gr { text-decoration-color: #2b6fd6; }

.cursor { width: 1px; height: 13px; margin: 9px 0 0 14px; background: #777; }

.vscroll {
  width: 20px;
  flex: none;
  display: flex;
  flex-direction: column;
  padding-top: 4px;
  margin-left: auto;
}

.vs-btn { display: flex; align-items: center; justify-content: center; height: 18px; background: #fff; border: 1px solid #d0d0d0; }
.vs-thumb { height: 62px; background: #fff; border: 1px solid #d0d0d0; border-top: 0; }
.vs-end { margin-top: auto; margin-bottom: 3px; }

/* status bar */
.status {
  flex: none;
  height: 27px;
  display: flex;
  align-items: center;
  padding-bottom: 1px;
  background: #f3f3f3;
  border-top: 1px solid #c6c6c6;
  font-size: 12.5px;
  color: #444;
}

.st-page { margin-left: 10px; width: 99px; }
.st-words { width: 112px; }
.st-proof { flex: none; }
.st-lang { margin-left: 23px; }

.views { display: flex; align-self: stretch; margin: 0 4px -1px auto; }
.view { display: flex; align-items: center; justify-content: center; width: 50px; }
.view.active { background: #c6c6c6; }

.zoom { display: flex; align-items: center; width: 222px; height: 100%; padding-right: 18px; }
.z-btn { width: 14px; text-align: center; font-size: 17px; line-height: 20px; color: #555; }
.z-track { position: relative; width: 125px; height: 1px; margin: 0 4px; background: #aaa; }
.z-tick { position: absolute; left: 62px; top: -3px; width: 1px; height: 7px; background: #999; }
.z-thumb { position: absolute; left: 34px; top: -7px; width: 6px; height: 14px; background: #999; }
.z-val { margin-left: auto; color: #555; letter-spacing: .5px; }

/* taskbar */
.taskbar {
  flex: none;
  height: 50px;
  display: flex;
  background: #191919;
  color: #fff;
}

.tb { position: relative; display: flex; align-items: center; justify-content: center; height: 50px; flex: none; }
.tb.run::after { content: ""; position: absolute; left: 5px; right: 5px; bottom: 0; height: 3px; background: #76b9ed; }
.tb.current-app { background: #555; }
.tb.current-app::after { left: 0; right: 0; }

.chrome {
  display: block;
  width: 28px;
  height: 28px;
  border-radius: 50%;
  background:
    radial-gradient(circle, #4688f1 0 5px, #fff 5.5px 7px, transparent 7.5px),
    conic-gradient(from -30deg, #dd4b3e 0 120deg, #fcc934 120deg 240deg, #249d4b 240deg 360deg);
}

.tray { display: flex; align-items: center; margin-left: auto; padding-right: 17px; }
.tr { display: flex; align-items: center; justify-content: center; height: 50px; }
.ces { font-size: 13.5px; }
.clock { width: 88px; display: flex; flex-direction: column; align-items: center; gap: 6px; font-size: 13.5px; line-height: 18px; }
.notif { position: relative; display: flex; justify-content: center; width: 48px; }
.badge {
  position: absolute;
  left: 23px;
  top: 8px;
  width: 21px;
  height: 21px;
  border-radius: 50%;
  background: #333;
  border: 1px solid #888;
  text-align: center;
  font-style: normal;
  font-weight: 700;
  font-size: 13px;
  line-height: 19px;
}
```
